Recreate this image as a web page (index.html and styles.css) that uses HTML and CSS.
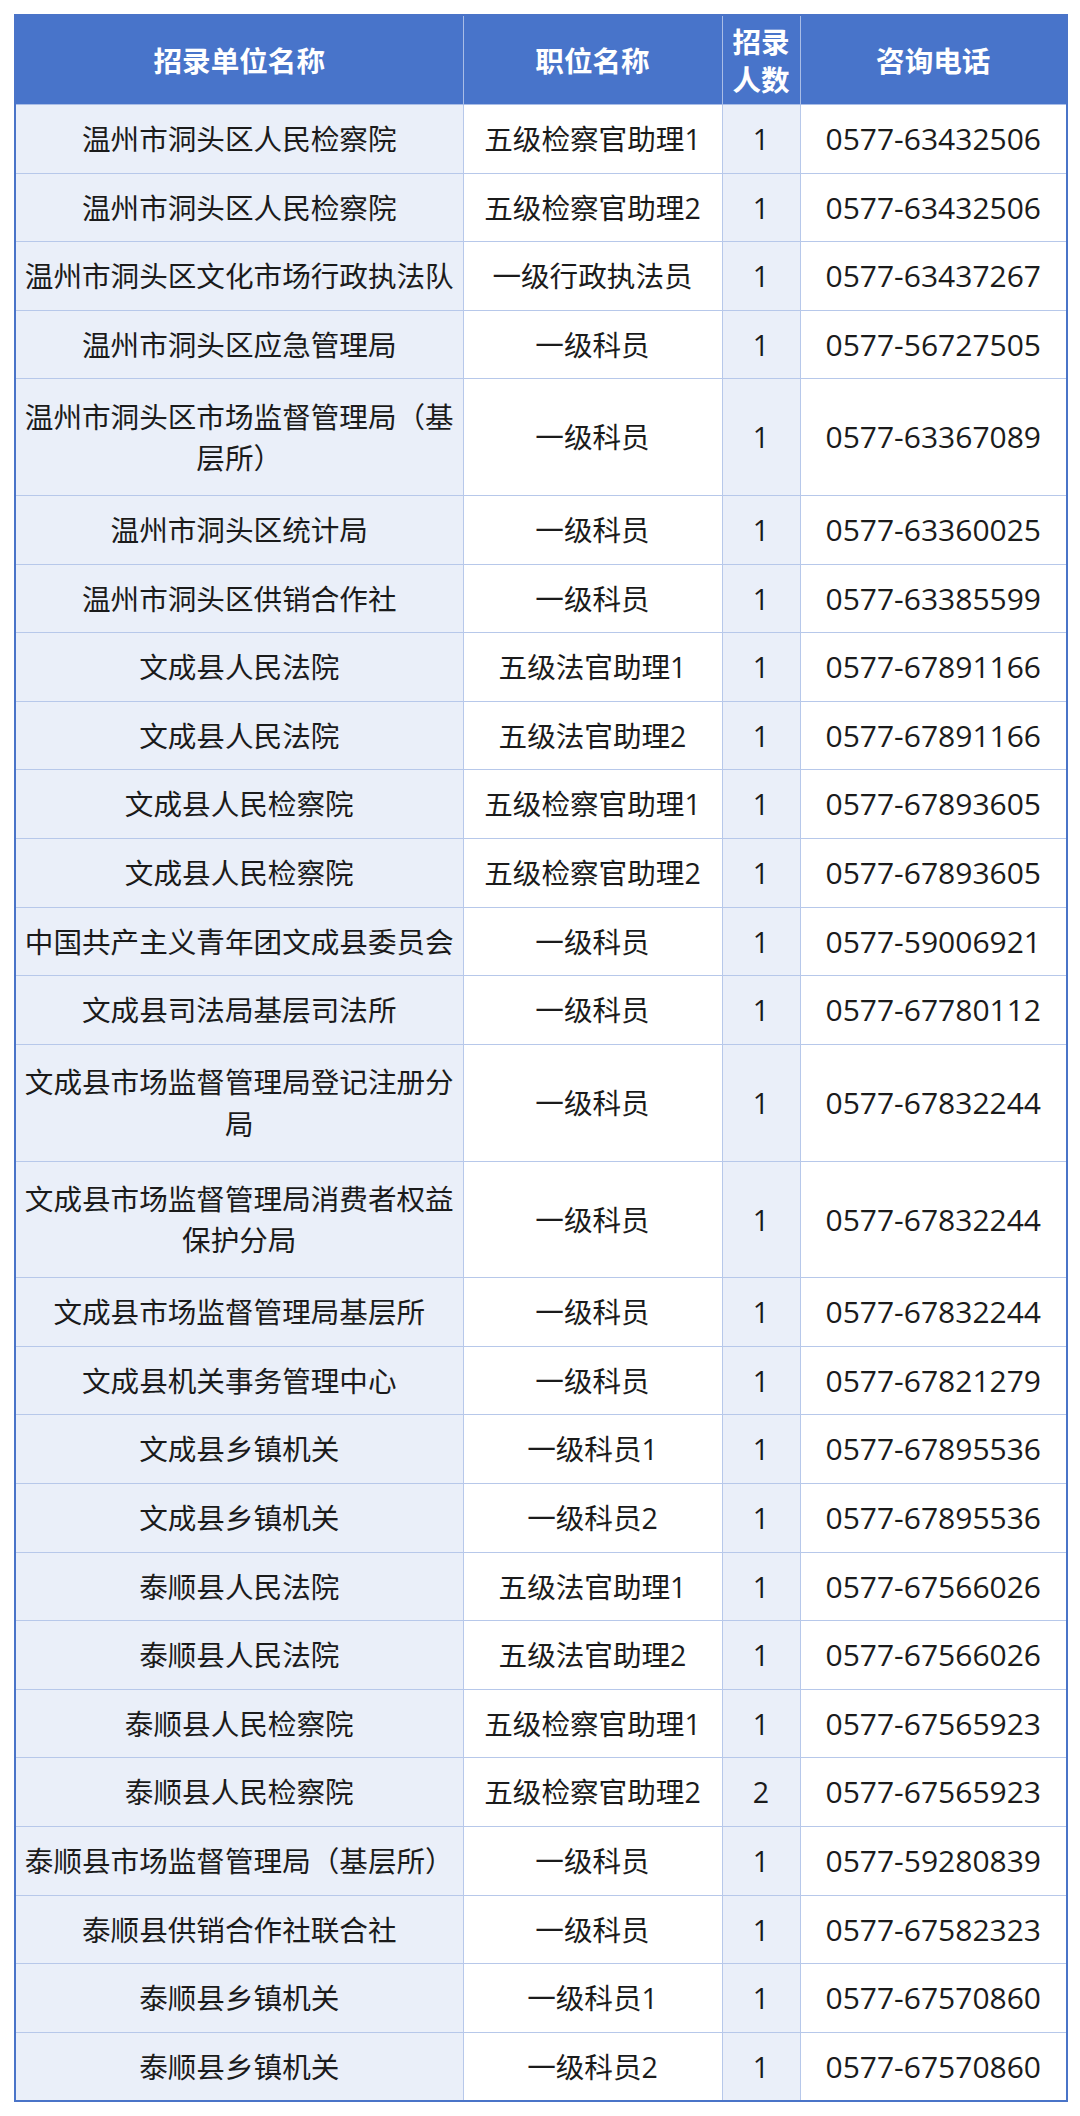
FILE: index.html
```html
<!DOCTYPE html>
<html lang="zh-CN">
<head>
<meta charset="utf-8">
<title>招录单位</title>
<link rel="stylesheet" href="styles.css">
</head>
<body>
<div class="page">
<table class="jobs">
  <colgroup>
    <col class="c-unit"><col class="c-post"><col class="c-num"><col class="c-tel">
  </colgroup>
  <thead>
    <tr><th>招录单位名称</th><th>职位名称</th><th class="narrow">招录人数</th><th>咨询电话</th></tr>
  </thead>
  <tbody>
    <tr><td>温州市洞头区人民检察院</td><td>五级检察官助理1</td><td>1</td><td class="tel">0577-63432506</td></tr>
    <tr><td>温州市洞头区人民检察院</td><td>五级检察官助理2</td><td>1</td><td class="tel">0577-63432506</td></tr>
    <tr><td>温州市洞头区文化市场行政执法队</td><td>一级行政执法员</td><td>1</td><td class="tel">0577-63437267</td></tr>
    <tr><td>温州市洞头区应急管理局</td><td>一级科员</td><td>1</td><td class="tel">0577-56727505</td></tr>
    <tr class="tall"><td>温州市洞头区市场监督管理局（基层所）</td><td>一级科员</td><td>1</td><td class="tel">0577-63367089</td></tr>
    <tr><td>温州市洞头区统计局</td><td>一级科员</td><td>1</td><td class="tel">0577-63360025</td></tr>
    <tr><td>温州市洞头区供销合作社</td><td>一级科员</td><td>1</td><td class="tel">0577-63385599</td></tr>
    <tr><td>文成县人民法院</td><td>五级法官助理1</td><td>1</td><td class="tel">0577-67891166</td></tr>
    <tr><td>文成县人民法院</td><td>五级法官助理2</td><td>1</td><td class="tel">0577-67891166</td></tr>
    <tr><td>文成县人民检察院</td><td>五级检察官助理1</td><td>1</td><td class="tel">0577-67893605</td></tr>
    <tr><td>文成县人民检察院</td><td>五级检察官助理2</td><td>1</td><td class="tel">0577-67893605</td></tr>
    <tr><td>中国共产主义青年团文成县委员会</td><td>一级科员</td><td>1</td><td class="tel">0577-59006921</td></tr>
    <tr><td>文成县司法局基层司法所</td><td>一级科员</td><td>1</td><td class="tel">0577-67780112</td></tr>
    <tr class="tall"><td>文成县市场监督管理局登记注册分局</td><td>一级科员</td><td>1</td><td class="tel">0577-67832244</td></tr>
    <tr class="tall"><td>文成县市场监督管理局消费者权益保护分局</td><td>一级科员</td><td>1</td><td class="tel">0577-67832244</td></tr>
    <tr><td>文成县市场监督管理局基层所</td><td>一级科员</td><td>1</td><td class="tel">0577-67832244</td></tr>
    <tr><td>文成县机关事务管理中心</td><td>一级科员</td><td>1</td><td class="tel">0577-67821279</td></tr>
    <tr><td>文成县乡镇机关</td><td>一级科员1</td><td>1</td><td class="tel">0577-67895536</td></tr>
    <tr><td>文成县乡镇机关</td><td>一级科员2</td><td>1</td><td class="tel">0577-67895536</td></tr>
    <tr><td>泰顺县人民法院</td><td>五级法官助理1</td><td>1</td><td class="tel">0577-67566026</td></tr>
    <tr><td>泰顺县人民法院</td><td>五级法官助理2</td><td>1</td><td class="tel">0577-67566026</td></tr>
    <tr><td>泰顺县人民检察院</td><td>五级检察官助理1</td><td>1</td><td class="tel">0577-67565923</td></tr>
    <tr><td>泰顺县人民检察院</td><td>五级检察官助理2</td><td>2</td><td class="tel">0577-67565923</td></tr>
    <tr><td>泰顺县市场监督管理局（基层所）</td><td>一级科员</td><td>1</td><td class="tel">0577-59280839</td></tr>
    <tr><td>泰顺县供销合作社联合社</td><td>一级科员</td><td>1</td><td class="tel">0577-67582323</td></tr>
    <tr><td>泰顺县乡镇机关</td><td>一级科员1</td><td>1</td><td class="tel">0577-67570860</td></tr>
    <tr><td>泰顺县乡镇机关</td><td>一级科员2</td><td>1</td><td class="tel">0577-67570860</td></tr>
  </tbody>
</table>
</div>
</body>
</html>
```

FILE: styles.css
```css
html, body {
  margin: 0;
  padding: 0;
  background: #ffffff;
}

.page {
  padding: 14px 0 0 14px;
}

.jobs {
  width: 1052px;
  table-layout: fixed;
  border-collapse: collapse;
  border: 2px solid #4a74c8;
  font-family: "Open Sans", "Noto Sans CJK SC", sans-serif;
  font-size: 28.6px;
  color: #1b1b1b;
}

.c-unit { width: 448px; }
.c-post { width: 259px; }
.c-num  { width: 78px; }
.c-tel  { width: 267px; }

.jobs th {
  height: 76px;
  padding: 6px 4px;
  background: #4874ca;
  color: #ffffff;
  font-family: "Noto Sans CJK SC", sans-serif;
  font-weight: 700;
  line-height: 38px;
  text-align: center;
  vertical-align: middle;
  border: 1.5px solid #a9bde6;
  border-top-color: #4a74c8;
}

.jobs th.narrow {
  padding: 6px 2px;
}

.jobs td {
  padding: 13.05px 6px;
  line-height: 41.5px;
  text-align: center;
  vertical-align: middle;
  border: 1.5px solid #b7c8ea;
  background: #ffffff;
}

.jobs tr.tall td {
  padding: 16.35px 6px;
}

.jobs td:nth-child(1),
.jobs td:nth-child(3) {
  background: #eaeff9;
}

.jobs td.tel {
  font-size: 30px;
}
```
